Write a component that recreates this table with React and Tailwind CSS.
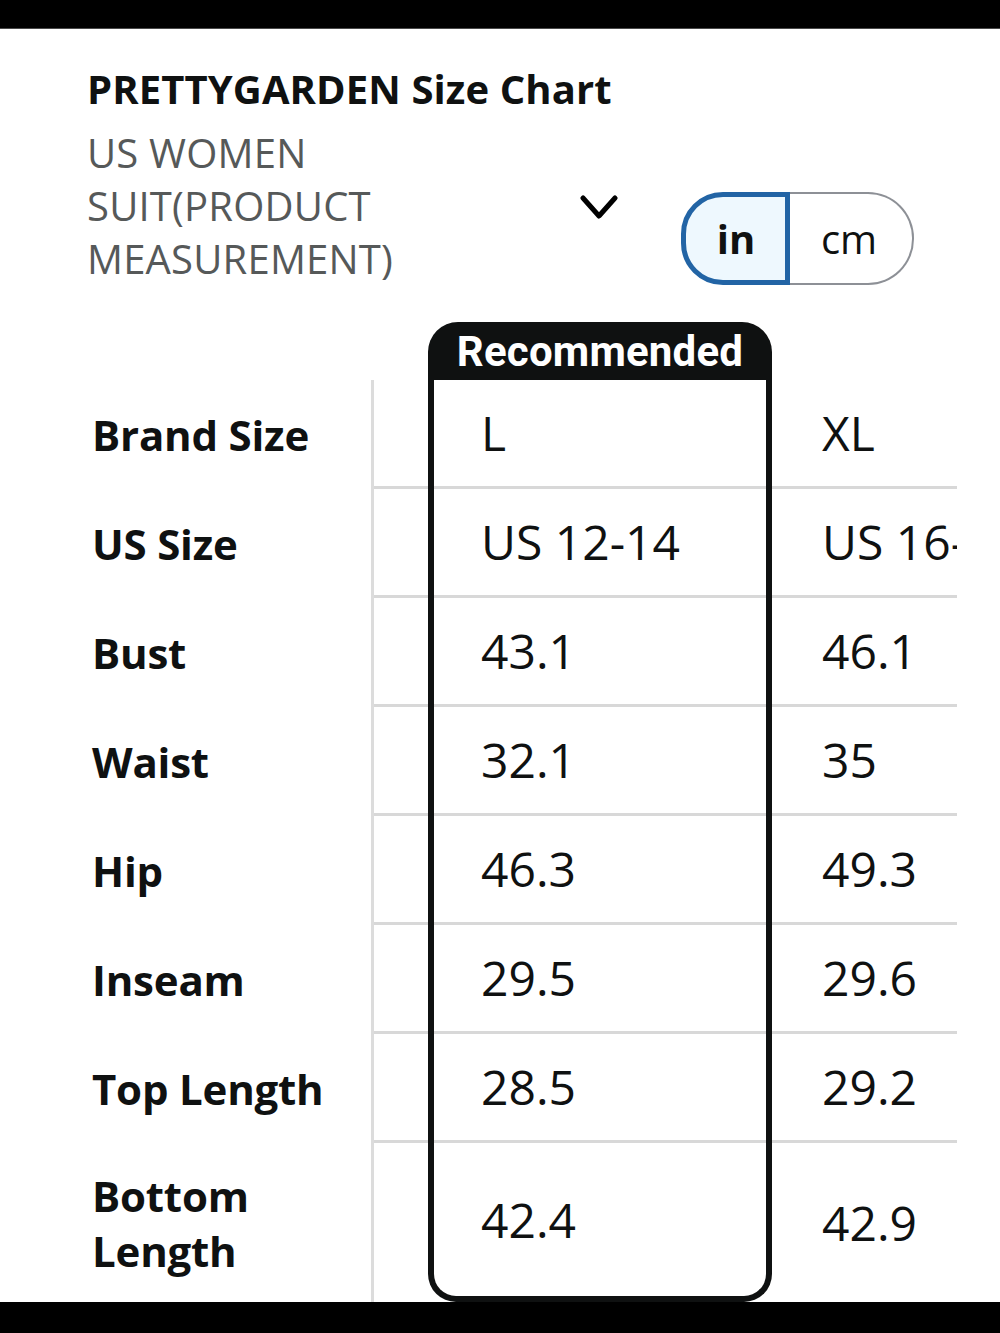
import React from "react";

const labels = [
  ["Brand Size"],
  ["US Size"],
  ["Bust"],
  ["Waist"],
  ["Hip"],
  ["Inseam"],
  ["Top Length"],
  ["Bottom", "Length"],
];
const rec = ["L", "US 12-14", "43.1", "32.1", "46.3", "29.5", "28.5", "42.4"];
const xl = ["XL", "US 16-18", "46.1", "35", "49.3", "29.6", "29.2", "42.9"];

export default function App() {
  return (
    <div className="w-[1000px] h-[1333px] bg-white flex flex-col overflow-hidden text-[#0f1111] font-['Open_Sans',sans-serif]">
      <div className="h-[29px] shrink-0 bg-black border-b border-[#4a4a4a]" />
      <div className="flex-1 overflow-hidden pl-[87px]">
        <h1 className="mt-[35px] text-[40px] leading-[49px] font-bold tracking-[0.1px] font-['Open_Sans',sans-serif]">
          PRETTYGARDEN Size Chart
        </h1>
        <div className="mt-[13px] flex">
          <div className="w-[480px] text-[40px] leading-[53px] text-[#565959] font-['Open_Sans',sans-serif] tracking-[0.2px]">
            US WOMEN
            <br />
            SUIT(PRODUCT
            <br />
            MEASUREMENT)
          </div>
          <div className="self-center w-[38px] h-[27px] mt-[6px] ml-[13px]">
            <svg width="38" height="27" viewBox="0 0 38 27">
              <polyline points="3,3 19,21 35,3" fill="none" stroke="#000" strokeWidth="5" strokeLinecap="round" strokeLinejoin="round" />
            </svg>
          </div>
          <div className="self-end ml-[63px] flex h-[93px]">
            <div className="w-[109px] h-full rounded-l-[42px] border-[5px] border-[#2264a5] bg-[#eef8fe] flex items-center justify-center text-[40px] font-bold leading-none pl-[1px]">
              in
            </div>
            <div className="w-[124px] h-full rounded-r-[46px] border-2 border-l-0 border-[#8d9096] flex items-center justify-center text-[40px] leading-none pr-[4px]">
              cm
            </div>
          </div>
        </div>

        <div className="mt-[37px] flex">
          {/* label column */}
          <div className="w-[287px] flex flex-col">
            <div className="h-[58px]" />
            <div className="border-r-[3px] border-[#dcdcdc] flex flex-col">
              {labels.map((l, i) => (
                <div
                  key={i}
                  className={`${i === 7 ? "h-[159px]" : "h-[109px]"} pl-[5px] flex flex-col justify-center text-[42px] font-bold leading-[55px] tracking-[-0.2px]`}
                >
                  {l.map((t) => (
                    <span key={t}>{t}</span>
                  ))}
                </div>
              ))}
            </div>
          </div>

          {/* scrolling data area */}
          <div className="w-[583px] overflow-hidden flex text-[48px] leading-none">
            {/* spacer column */}
            <div className="w-[54px] shrink-0 flex flex-col">
              <div className="h-[58px]" />
              {labels.map((l, i) => (
                <div
                  key={i}
                  className={i === 7 ? "h-[159px]" : "h-[109px] border-b-[3px] border-[#d8d8d8]"}
                />
              ))}
            </div>

            {/* recommended column */}
            <div className="w-[344px] shrink-0 flex flex-col">
              <div className="h-[58px] bg-[#0f1111] rounded-t-[30px] flex items-center justify-center text-white text-[42px] font-bold font-['Roboto',sans-serif] pt-[2px] tracking-[0.2px]">
                Recommended
              </div>
              <div className="border-x-[6px] border-b-[6px] border-[#0f1111] rounded-b-[28px] flex flex-col">
                {rec.map((v, i) => (
                  <div
                    key={i}
                    className={`${i === 7 ? "h-[153px]" : "h-[109px] border-b-[3px] border-[#d8d8d8]"} pl-[47px] flex items-center`}
                  >
                    {v}
                  </div>
                ))}
              </div>
            </div>

            {/* XL column */}
            <div className="w-[320px] shrink-0 flex flex-col">
              <div className="h-[58px]" />
              {xl.map((v, i) => (
                <div
                  key={i}
                  className={`${i === 7 ? "h-[159px]" : "h-[109px] border-b-[3px] border-[#d8d8d8]"} pl-[50px] flex items-center whitespace-nowrap`}
                >
                  {v}
                </div>
              ))}
            </div>
          </div>
        </div>
      </div>
      <div className="h-[31px] shrink-0 bg-black" />
    </div>
  );
}
